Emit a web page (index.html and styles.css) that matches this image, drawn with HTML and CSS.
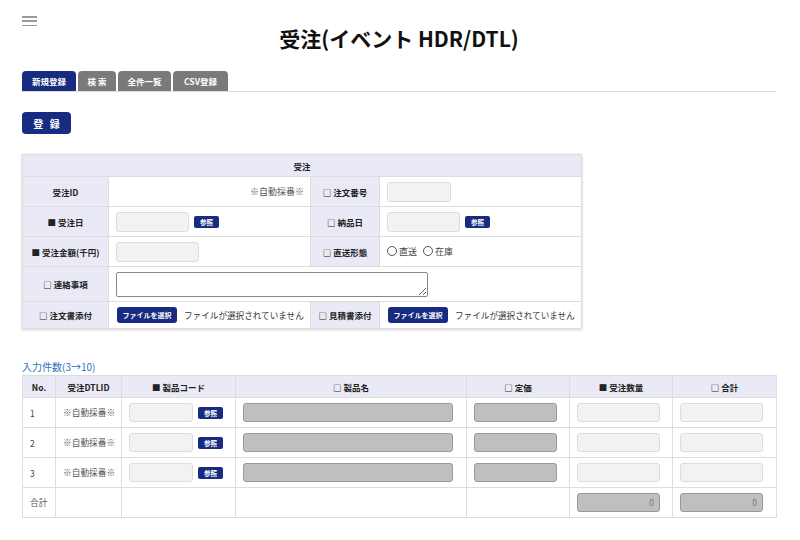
FILE: index.html
```html
<!DOCTYPE html>
<html lang="ja">
<head>
<meta charset="utf-8">
<link rel="stylesheet" href="styles.css">
</head>
<body>
<div class="page">
  <header class="top">
    <div class="burger"><span></span><span></span><span></span></div>
    <h1 class="title">受注(イベント HDR/DTL)</h1>
  </header>

  <nav class="tabs">
    <span class="tab active">新規登録</span>
    <span class="tab">検 索</span>
    <span class="tab">全件一覧</span>
    <span class="tab">CSV登録</span>
  </nav>

  <button class="btn-main">登 録</button>

  <table class="hdr">
    <colgroup>
      <col class="c1"><col class="c2"><col class="c3"><col class="c4">
    </colgroup>
    <tr class="hrow"><th colspan="4">受注</th></tr>
    <tr class="r30">
      <th>受注ID</th>
      <td class="auto">※自動採番※</td>
      <th>□ 注文番号</th>
      <td><span class="inp w64"></span></td>
    </tr>
    <tr class="r30">
      <th>■ 受注日</th>
      <td><span class="inp w73"></span><span class="ref">参照</span></td>
      <th>□ 納品日</th>
      <td><span class="inp w73"></span><span class="ref">参照</span></td>
    </tr>
    <tr class="r30">
      <th>■ 受注金額(千円)</th>
      <td><span class="inp w83"></span></td>
      <th>□ 直送形態</th>
      <td><label class="radio"><span class="circle"></span>直送</label><label class="radio"><span class="circle"></span>在庫</label></td>
    </tr>
    <tr class="r35">
      <th>□ 連絡事項</th>
      <td colspan="3"><textarea class="memo"></textarea></td>
    </tr>
    <tr class="r27">
      <th>□ 注文書添付</th>
      <td class="file"><span class="filebtn">ファイルを選択</span><span class="nofile">ファイルが選択されていません</span></td>
      <th>□ 見積書添付</th>
      <td class="file"><span class="filebtn">ファイルを選択</span><span class="nofile">ファイルが選択されていません</span></td>
    </tr>
  </table>

  <div class="count">入力件数(3→10)</div>

  <table class="dtl">
    <colgroup>
      <col class="d1"><col class="d2"><col class="d3"><col class="d4"><col class="d5"><col class="d6"><col class="d7">
    </colgroup>
    <tr class="dh">
      <th>No.</th><th>受注DTLID</th><th>■ 製品コード</th><th>□ 製品名</th><th>□ 定価</th><th>■ 受注数量</th><th>□ 合計</th>
    </tr>
    <tr>
      <td>1</td><td class="g">※自動採番※</td>
      <td><span class="inp w64"></span><span class="ref">参照</span></td>
      <td><span class="inp dis w210"></span></td>
      <td><span class="inp dis w83"></span></td>
      <td><span class="inp w83"></span></td>
      <td><span class="inp w83"></span></td>
    </tr>
    <tr>
      <td>2</td><td class="g">※自動採番※</td>
      <td><span class="inp w64"></span><span class="ref">参照</span></td>
      <td><span class="inp dis w210"></span></td>
      <td><span class="inp dis w83"></span></td>
      <td><span class="inp w83"></span></td>
      <td><span class="inp w83"></span></td>
    </tr>
    <tr>
      <td>3</td><td class="g">※自動採番※</td>
      <td><span class="inp w64"></span><span class="ref">参照</span></td>
      <td><span class="inp dis w210"></span></td>
      <td><span class="inp dis w83"></span></td>
      <td><span class="inp w83"></span></td>
      <td><span class="inp w83"></span></td>
    </tr>
    <tr>
      <td class="g">合計</td><td></td><td></td><td></td><td></td>
      <td><span class="inp dis w83 num">0</span></td>
      <td><span class="inp dis w83 num">0</span></td>
    </tr>
  </table>
</div>
</body>
</html>
```

FILE: styles.css
```css
* { box-sizing: border-box; }
body {
  margin: 0;
  font-family: "Noto Sans CJK JP", "Noto Sans", sans-serif;
  color: #333;
  background: #fff;
}
.page { padding: 0 24px 30px 22px; }

.top { padding-top: 16px; }
.burger { width: 15px; height: 10px; display: flex; flex-direction: column; justify-content: space-between; }
.burger span { display: block; height: 1.5px; background: #999; }
.title {
  margin: -1px 0 0;
  text-align: center;
  font-size: 21px;
  line-height: 26px;
  font-weight: bold;
  color: #111;
}

.tabs {
  margin-top: 20px;
  display: flex;
  gap: 2px;
  border-bottom: 1px solid #ddd;
  height: 21px;
}
.tab {
  height: 20px;
  background: #7a7a7a;
  color: #fff;
  font-size: 8.5px;
  font-weight: bold;
  line-height: 20px;
  text-align: center;
  border-radius: 4px 4px 0 0;
}
.tab:nth-child(1) { width: 54px; }
.tab:nth-child(2) { width: 38px; }
.tab:nth-child(3) { width: 53px; }
.tab:nth-child(4) { width: 55px; }
.tab.active { background: #172b80; }

.btn-main {
  display: block;
  margin-top: 20px;
  width: 49px;
  height: 22px;
  border: 0;
  border-radius: 4px;
  background: #172b80;
  color: #fff;
  font-family: inherit;
  font-size: 10px;
  letter-spacing: 2px;
  font-weight: bold;
  padding: 0 0 0 2px;
}

.hdr {
  margin-top: 20px;
  width: 559px;
  border-collapse: collapse;
  table-layout: fixed;
  box-shadow: 0 1px 3px rgba(0,0,0,0.18);
  font-size: 8.5px;
}
.hdr .c1 { width: 86px; }
.hdr .c2 { width: 202px; }
.hdr .c3 { width: 69px; }
.hdr .c4 { width: 202px; }
.hdr th, .hdr td { border: 1px solid #ddd; padding: 0; }
.hdr th { background: #eaeaf6; font-weight: bold; color: #222; text-align: center; }
.hdr td { padding-left: 7px; }
.hrow th { height: 22px; }
.r30 th, .r30 td { height: 30px; }
.r35 th, .r35 td { height: 35px; }
.r27 th, .r27 td { height: 27px; }
.hdr td.auto { text-align: right; padding-right: 6px; color: #555; font-size: 9px; }

.inp {
  display: inline-block;
  vertical-align: middle;
  height: 20px;
  background: #f2f2f2;
  border: 1px solid #ddd;
  border-radius: 3px;
}
.dtl .inp { height: 19px; }
.w64 { width: 64px; }
.w73 { width: 73px; }
.w83 { width: 83px; }
.w210 { width: 210px; }
.inp.dis { background: #bfbfbf; border-color: #999; }
.inp.num { text-align: right; padding-right: 5px; color: #777; font-size: 8.5px; line-height: 17px; }

.ref {
  display: inline-block;
  vertical-align: middle;
  margin-left: 5px;
  width: 25px;
  height: 12px;
  background: #172b80;
  color: #fff;
  border-radius: 2px;
  font-size: 6.5px;
  font-weight: bold;
  line-height: 12px;
  text-align: center;
}

.radio { display: inline-flex; align-items: center; margin-right: 6px; color: #444; font-size: 9px; }
.circle { width: 10px; height: 10px; border: 1px solid #555; border-radius: 50%; margin-right: 2px; background: #fff; }

.memo {
  display: block;
  width: 312px;
  height: 25px;
  margin: 0;
  border: 1px solid #888;
  border-radius: 2px;
  resize: both;
}

.hdr td.file { padding-left: 8px; white-space: nowrap; }
.filebtn {
  display: inline-block;
  vertical-align: middle;
  width: 60px;
  height: 16px;
  background: #172b80;
  color: #fff;
  border-radius: 3px;
  font-size: 7px;
  font-weight: bold;
  line-height: 16px;
  text-align: center;
}
.nofile { vertical-align: middle; margin-left: 7px; font-size: 8.6px; color: #333; }

.count {
  margin-top: 31px;
  font-size: 10px;
  line-height: 14px;
  color: #2f6fc0;
}

.dtl {
  margin-top: 1px;
  width: 754px;
  border-collapse: collapse;
  table-layout: fixed;
  font-size: 8.5px;
}
.dtl .d1 { width: 33px; }
.dtl .d2 { width: 66px; }
.dtl .d3 { width: 114px; }
.dtl .d4 { width: 231px; }
.dtl .d5 { width: 103px; }
.dtl .d6 { width: 103px; }
.dtl .d7 { width: 104px; }
.dtl th, .dtl td { border: 1px solid #ddd; }
.dtl th { background: #eaeaf6; height: 22px; font-weight: bold; color: #222; text-align: center; padding: 0; }
.dtl td { height: 30px; padding: 0 0 0 7px; color: #444; white-space: nowrap; }
.dtl td.g { color: #555; font-size: 8.7px; }
```
